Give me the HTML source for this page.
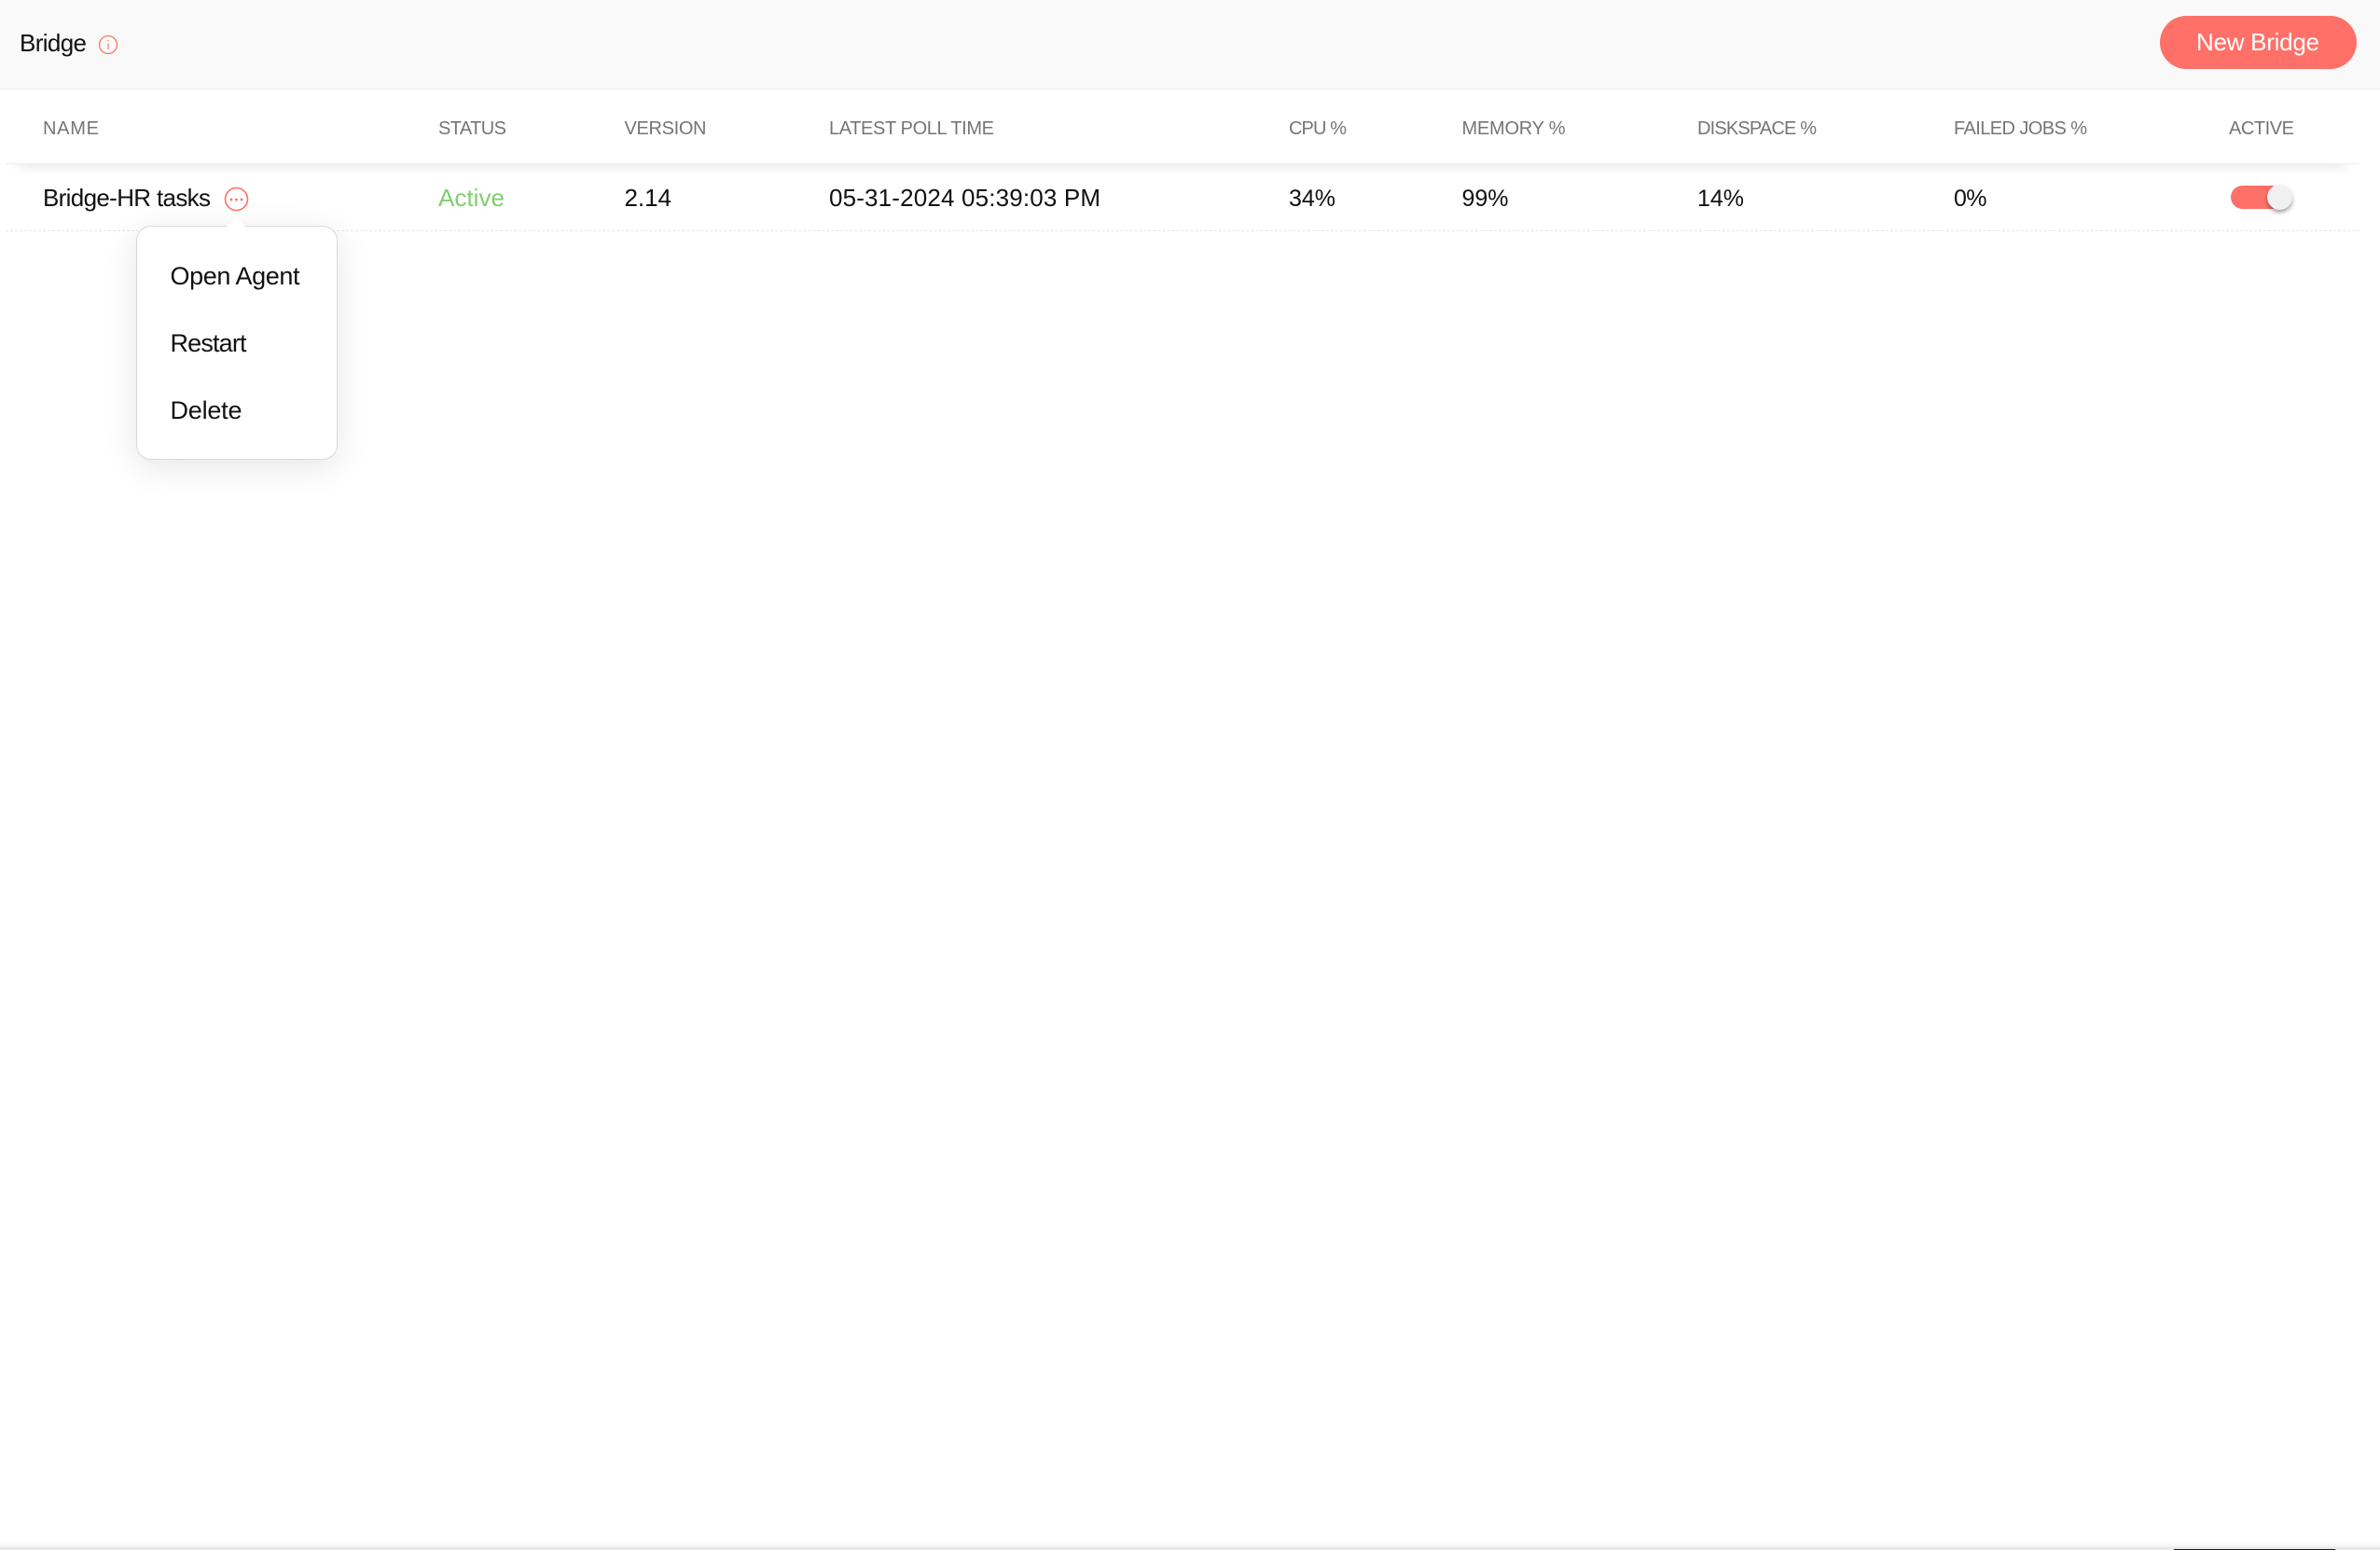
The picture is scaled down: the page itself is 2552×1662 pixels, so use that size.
<!DOCTYPE html>
<html lang="en">
<head>
<meta charset="utf-8">
<title>Bridge</title>
<style>
html,body{margin:0;padding:0;background:#fff}
body{width:2552px;height:1662px;position:relative;overflow:hidden;font-family:"Liberation Sans",sans-serif}
.a{position:absolute}
#top{left:0;top:0;width:2552px;height:95px;background:#f9f9f9;border-bottom:1px solid #f0f0f0}
#btn{left:2316px;top:17px;width:211px;height:57px;border-radius:29px;background:#ff7068}
#thead{left:6px;top:96px;width:2524px;height:79px;background:#fff;border-bottom:1px solid #f0f0f0;box-shadow:0 14px 14px -14px rgba(0,0,0,.14)}
#rowline{left:6px;top:247px;width:2524px;height:0;border-top:1px dashed #e6e6e6}
#track{left:2392px;top:199px;width:56px;height:25px;border-radius:13px;background:#ff7068}
#knob{left:2431px;top:198px;width:27px;height:27px;border-radius:50%;background:#f0f0f0;box-shadow:0 3px 4px rgba(0,0,0,.35)}
#pop{left:146px;top:242px;width:214px;height:249px;background:#fff;border:1px solid #d8d8d8;border-radius:16px;box-sizing:content-box;box-shadow:0 8px 36px rgba(0,0,0,.1)}
#arrow{left:243px;top:232px;width:0;height:0;border-left:10px solid transparent;border-right:10px solid transparent;border-bottom:11px solid #fff}
#bottom{left:0;top:1652px;width:2552px;height:10px;background:linear-gradient(#fff 0,#f6f6f6 60%,#e9e9e9 70%,#e9e9e9 100%)}
#dark{left:2331px;top:1661px;width:173px;height:1px;background:#1a1a1a}
svg{position:absolute;left:0;top:0}
text{font-family:"Liberation Sans",sans-serif}
.h{font-size:20px;fill:#757575}
.r{font-size:26px;fill:#111}
.p{font-size:25px;fill:#111}
.m{font-size:27px;fill:#111}
</style>
</head>
<body>
<div class="a" id="top"></div>
<div class="a" id="btn"></div>
<div class="a" id="thead"></div>
<div class="a" id="rowline"></div>
<div class="a" id="track"></div>
<div class="a" id="knob"></div>
<div class="a" id="pop"></div>
<div class="a" id="arrow"></div>
<div class="a" id="bottom"></div>
<div class="a" id="dark"></div>
<svg width="2552" height="1662" viewBox="0 0 2552 1662" xmlns="http://www.w3.org/2000/svg">
  <text x="21" y="55" class="r" textLength="72" lengthAdjust="spacing">Bridge</text>
  <circle cx="116" cy="48" r="9.5" fill="none" stroke="#ff7068" stroke-width="1.3"/>
  <path d="M116 46.5V53M116 43V44.2" fill="none" stroke="#ff7068" stroke-width="1.2"/>
  <text x="2355" y="54" font-size="26" fill="#fff" textLength="132" lengthAdjust="spacing">New Bridge</text>

  <text x="46" y="144" class="h" textLength="60">NAME</text>
  <text x="470" y="144" class="h" textLength="73">STATUS</text>
  <text x="669.500" y="144" class="h" textLength="88">VERSION</text>
  <text x="889" y="144" class="h" textLength="177">LATEST POLL TIME</text>
  <text x="1382" y="144" class="h" textLength="62">CPU %</text>
  <text x="1567.500" y="144" class="h" textLength="111">MEMORY %</text>
  <text x="1820" y="144" class="h" textLength="128">DISKSPACE %</text>
  <text x="2095" y="144" class="h" textLength="143">FAILED JOBS %</text>
  <text x="2390" y="144" class="h" textLength="70">ACTIVE</text>

  <text x="46" y="221" class="r" textLength="180">Bridge-HR tasks</text>
  <circle cx="253.500" cy="213.500" r="12" fill="none" stroke="#ff7068" stroke-width="1.6"/>
  <circle cx="248" cy="214" r="1.400" fill="#ff7068"/>
  <circle cx="253.500" cy="214" r="1.400" fill="#ff7068"/>
  <circle cx="259" cy="214" r="1.400" fill="#ff7068"/>
  <text x="470" y="221" class="r" style="fill:#7fcf6e" textLength="71">Active</text>
  <text x="669.500" y="221" class="r" textLength="50.500">2.14</text>
  <text x="889" y="221" class="r" textLength="291">05-31-2024 05:39:03 PM</text>
  <text x="1382" y="221" class="p" textLength="50">34%</text>
  <text x="1567.500" y="221" class="p" textLength="50">99%</text>
  <text x="1820" y="221" class="p" textLength="50">14%</text>
  <text x="2095" y="221" class="p" textLength="35.500">0%</text>

  <text x="182.500" y="305" class="m" textLength="139">Open Agent</text>
  <text x="182.500" y="377" class="m" textLength="82">Restart</text>
  <text x="182.500" y="449" class="m" textLength="77">Delete</text>
</svg>
</body>
</html>
